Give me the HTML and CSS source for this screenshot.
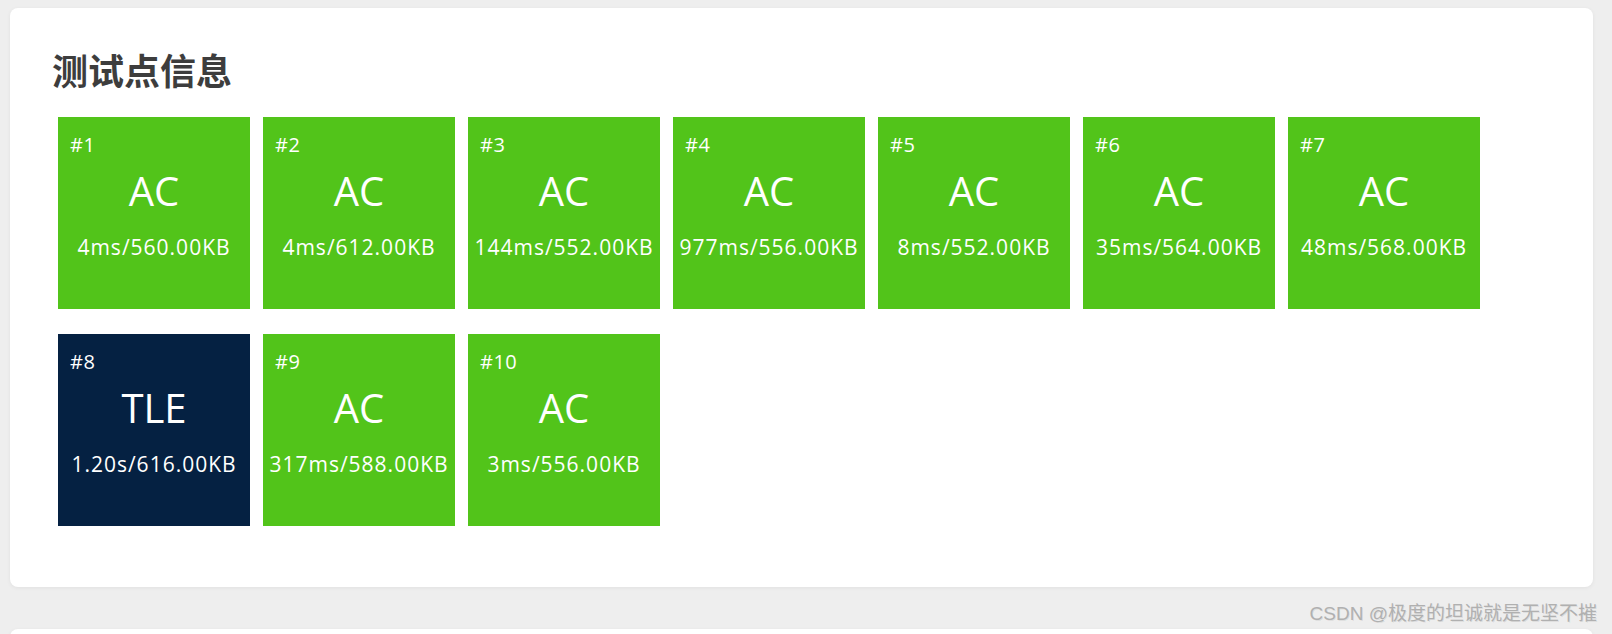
FILE: index.html
```html
<!DOCTYPE html>
<html lang="zh-CN">
<head>
    <meta charset="UTF-8">
    <meta name="viewport" content="width=device-width, initial-scale=1.0">
    <title>测试点信息</title>
    <link rel="stylesheet" href="styles.css">
</head>
<body>
    <div class="card">
        <h2 class="card-title">测试点信息</h2>
        <div class="case-list">
            <div class="case ac">
                <div class="case-id">#1</div>
                <div class="case-status">AC</div>
                <div class="case-info">4ms/560.00KB</div>
            </div>
            <div class="case ac">
                <div class="case-id">#2</div>
                <div class="case-status">AC</div>
                <div class="case-info">4ms/612.00KB</div>
            </div>
            <div class="case ac">
                <div class="case-id">#3</div>
                <div class="case-status">AC</div>
                <div class="case-info">144ms/552.00KB</div>
            </div>
            <div class="case ac">
                <div class="case-id">#4</div>
                <div class="case-status">AC</div>
                <div class="case-info">977ms/556.00KB</div>
            </div>
            <div class="case ac">
                <div class="case-id">#5</div>
                <div class="case-status">AC</div>
                <div class="case-info">8ms/552.00KB</div>
            </div>
            <div class="case ac">
                <div class="case-id">#6</div>
                <div class="case-status">AC</div>
                <div class="case-info">35ms/564.00KB</div>
            </div>
            <div class="case ac">
                <div class="case-id">#7</div>
                <div class="case-status">AC</div>
                <div class="case-info">48ms/568.00KB</div>
            </div>
            <div class="case tle">
                <div class="case-id">#8</div>
                <div class="case-status">TLE</div>
                <div class="case-info">1.20s/616.00KB</div>
            </div>
            <div class="case ac">
                <div class="case-id">#9</div>
                <div class="case-status">AC</div>
                <div class="case-info">317ms/588.00KB</div>
            </div>
            <div class="case ac">
                <div class="case-id">#10</div>
                <div class="case-status">AC</div>
                <div class="case-info">3ms/556.00KB</div>
            </div>
        </div>
    </div>

    <div class="card card-next"></div>

    <div class="watermark">CSDN @极度的坦诚就是无坚不摧</div>
</body>
</html>
```

FILE: styles.css
```css
body {
    margin: 0;
    padding: 8px 19px 0 10px;
    background-color: #eeeeee;
    font-family: "Open Sans", "Noto Sans", "Noto Sans CJK SC", sans-serif;
    height: 634px;
    overflow: hidden;
    box-sizing: border-box;
    position: relative;
}
.card {
    background-color: #fff;
    border-radius: 8px;
    box-shadow: 0 1px 4px rgba(0, 0, 0, 0.06);
    padding: 39px 42px 36px;
}
.card-title {
    margin: 0 0 26px;
    font-family: "Noto Sans CJK SC", sans-serif;
    font-size: 36px;
    font-weight: bold;
    line-height: 44px;
    color: #3d3d3d;
}
.case-list {
    display: flex;
    flex-wrap: wrap;
    column-gap: 13px;
    row-gap: 25px;
    padding-left: 6px;
    margin-bottom: 25px;
}
.case {
    width: 192px;
    height: 192px;
    box-sizing: border-box;
    padding-top: 15px;
    color: #fff;
    display: flex;
    flex-direction: column;
}
.case.ac {
    background-color: #52c41a;
}
.case.tle {
    background-color: #052142;
}
.case-id {
    padding-left: 12px;
    font-size: 20px;
    line-height: 26px;
    letter-spacing: 0.5px;
}
.case-status {
    text-align: center;
    font-size: 40px;
    line-height: 52px;
    margin-top: 7px;
}
.case-info {
    text-align: center;
    font-size: 21px;
    line-height: 30px;
    margin-top: 15px;
    letter-spacing: 1px;
    white-space: nowrap;
}
.card-next {
    margin-top: 42px;
    height: 120px;
    padding: 0;
}
.watermark {
    position: absolute;
    right: 15px;
    top: 603px;
    font-family: "Liberation Sans", "Noto Sans CJK SC", sans-serif;
    font-size: 19px;
    line-height: 22px;
    color: #b0b0b0;
    text-shadow: 1px 1px 0 rgba(0, 0, 0, 0.08);
}
```
